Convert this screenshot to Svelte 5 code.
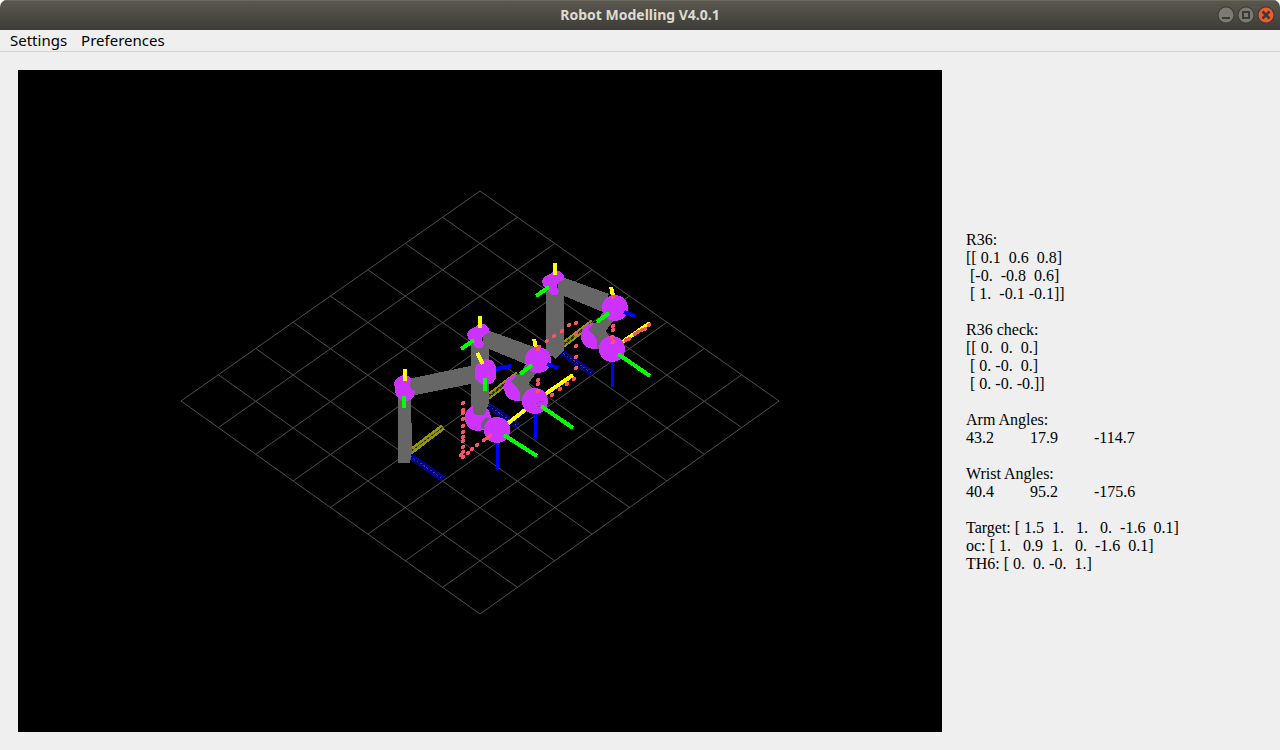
<script>
  const menus = ['Settings', 'Preferences'];

  const report = [
    'R36:',
    '[[ 0.1  0.6  0.8]',
    ' [-0.  -0.8  0.6]',
    ' [ 1.  -0.1 -0.1]]',
    '',
    'R36 check:',
    '[[ 0.  0.  0.]',
    ' [ 0. -0.  0.]',
    ' [ 0. -0. -0.]]',
    '',
    'Arm Angles:',
    '43.2         17.9         -114.7',
    '',
    'Wrist Angles:',
    '40.4         95.2         -175.6',
    '',
    'Target: [ 1.5  1.   1.   0.  -1.6  0.1]',
    'oc: [ 1.   0.9  1.   0.  -1.6  0.1]',
    'TH6: [ 0.  0. -0.  1.]'
  ].join('\n');

  // Floor grid: eight cells each way between the projected corners.
  const cells = 8;
  const top = [480, 191], left = [181, 401], right = [779, 401], bottom = [480, 614];
  const mix = (a, b, t) => [a[0] + (b[0] - a[0]) * t, a[1] + (b[1] - a[1]) * t];
  const grid = Array.from({ length: cells + 1 }, (_, i) => i / cells).flatMap((t) => [
    [mix(top, left, t), mix(right, bottom, t)],
    [mix(top, right, t), mix(left, bottom, t)]
  ]);

  const trail = [
    [463, 403], [463, 410], [463, 413], [463, 419], [463, 426], [463, 432], [463, 437], [463, 441],
    [463, 447], [463, 452], [461, 455], [463, 457], [468, 453], [472, 449], [477, 445], [484, 440],
    [487, 438], [490, 436],
    [576, 323], [569, 325], [562, 331], [554, 336], [547, 341], [539, 347], [538, 349],
    [576, 334], [576, 346], [576, 357], [576, 368], [574, 379], [567, 384], [560, 389], [552, 395],
    [538, 380], [538, 384], [538, 391],
    [613, 297], [613, 326], [613, 330], [612, 337], [613, 342],
    [649, 325], [645, 329], [642, 330], [638, 332], [635, 334], [629, 339], [626, 340]
  ];

  // Foot of each arm, with the thickness of the dark core in its base axes.
  const bases = [[-150, 105, 1], [-75, 52, 2], [0, 0, 2]];
</script>

<div class="window">
  <header class="titlebar">
    <h1>Robot Modelling V4.0.1</h1>
    <div class="controls">
      <button aria-label="Minimize">
        <svg viewBox="0 0 18 18"><circle cx="9" cy="9" r="8.5" fill="#3b3a35" /><circle cx="9" cy="9" r="7.5" fill="#7b7a73" /><path d="M5 12h8" stroke="#3b3a35" stroke-width="2" /></svg>
      </button>
      <button aria-label="Maximize">
        <svg viewBox="0 0 18 18"><circle cx="9" cy="9" r="8.5" fill="#3b3a35" /><circle cx="9" cy="9" r="7.5" fill="#7b7a73" /><path d="M6 6h6v6h-6z" fill="none" stroke="#3b3a35" stroke-width="2" /></svg>
      </button>
      <button aria-label="Close">
        <svg viewBox="0 0 18 18"><circle cx="9" cy="9" r="8.5" fill="#3b3a35" /><circle cx="9" cy="9" r="7.5" fill="#ee5b2d" /><path d="M5.5 5.5l7 7M12.5 5.5l-7 7" stroke="#3b3a35" stroke-width="2.5" /></svg>
      </button>
    </div>
  </header>

  <nav class="menubar">
    {#each menus as menu}
      <button>{menu}</button>
    {/each}
  </nav>

  <main>
    <div class="viewport">
      <svg viewBox="18 70 924 662" role="img" aria-label="Robot arm model" shape-rendering="crispEdges">
        <g stroke="#505050" stroke-width="1" shape-rendering="auto">
          {#each grid as [a, b]}
            <line x1={a[0]} y1={a[1]} x2={b[0]} y2={b[1]} />
          {/each}
        </g>

        {#each bases as [dx, dy, core]}
          <g transform="translate({dx} {dy})">
            <path d="M560 347L593 322" stroke="#959500" stroke-width="6" />
            <path d="M560 347L593 322" stroke="#2a2a00" stroke-width={core} />
            <path d="M560 347L593 322" stroke="#606030" stroke-width="1" stroke-dasharray="2 2" />
            <path d="M560 351L593 374" stroke="#0000a0" stroke-width="6" />
            <path d="M560 351L593 374" stroke="#000038" stroke-width={core} />
            <path d="M560 351L593 374" stroke="#404068" stroke-width="1" stroke-dasharray="2 2" />
          </g>
        {/each}

        {#snippet shoulder(dx, dy)}
          <g transform="translate({dx} {dy})">
            <path fill="#666" d="M546 288H564V351L555 359L552 356H546Z" />
            <path fill="#666" d="M560 277L565 278L609 294L603 312L564 296L556 294Z" />
            <path fill="#cc33ff" d="M542 281L544 277L550 274L554 271L560 271L564 276L565 279L561 281L557 284L557 288L559 291L557 295L551 295L548 291L543 285Z" />
            <path fill="#ff0" d="M553 263h4v12h-4z" />
            <path stroke="#0f0" stroke-width="4" d="M536 296L549 287" />
          </g>
        {/snippet}

        {#snippet wrist(dx, dy)}
          <g transform="translate({dx} {dy})">
            <circle cx="594" cy="336" r="13" fill="#cc33ff" />
            <path fill="#666" d="M593 324L597 322L603 312L617 316L605 332L610 337L602 350L597 349L597 341L595 337L588 330Z" />
            <path stroke="#ff0" stroke-width="4" d="M611 287L614 300" />
            <circle cx="615" cy="308" r="13" fill="#cc33ff" />
            <path stroke="#00f" stroke-width="4" d="M624 312L635 316" />
            <path stroke="#0f0" stroke-width="4" d="M597 322L609 313" />
            <path fill="#00f" d="M611 361h3v26h-3z" />
            <path stroke="#ff0" stroke-width="4" d="M621 343L650 323" />
            <circle cx="612" cy="349" r="13" fill="#cc33ff" />
            <path stroke="#0f0" stroke-width="4" d="M618 354L650 376" />
          </g>
        {/snippet}

        {@render shoulder(0, 0)}
        {@render wrist(0, 0)}
        {@render shoulder(-75, 53)}
        <path stroke="#ff0" stroke-width="4" d="M507 424L534 403" />
        {@render wrist(-77, 52)}
        <path stroke="#666" d="M539 401.5h5M536 403.5h2M542 404.5h1M537 406.5h3" />

        <g>
          <path fill="#666" d="M398 395H411L412 450L410 463H398Z" />
          <path fill="#666" d="M408 379L480 364V382L410 396Z" />
          <path fill="#cc33ff" d="M394 383L397 378L403 375L408 376L411 379L410 385L411 389L415 391L414 396L412 399L407 401L401 401L396 396Z" />
          <path fill="#ff0" d="M403 369h4v12h-4z" />
          <path fill="#0f0" d="M402 396h4v12h-4z" />
          <circle cx="478" cy="418" r="13" fill="#cc33ff" />
          <path fill="#666" d="M471 375H489L488 405L486 412L484 415H476L473 413V405L471 400ZM486 417L494 420L490 432L481 428L481 422Z" />
          <path fill="#cc33ff" d="M475 368L477 364L482 360L487 359L493 361L496 367V378L493 383L485 385L479 383L475 379Z" />
          <path stroke="#ff0" stroke-width="4" d="M477 353L483 364" />
          <path stroke="#00f" stroke-width="4" d="M496 369L511 366" />
          <path fill="#0f0" d="M483 378h4v13h-4z" />
          <path fill="#00f" d="M496 442h3v27h-3z" />
          <circle cx="497" cy="430" r="13" fill="#cc33ff" />
          <path stroke="#0f0" stroke-width="4" d="M504 435L537 456" />
        </g>

        <g fill="#ff5066">
          {#each trail as [x, y]}
            <circle cx={x} cy={y} r="2" />
          {/each}
        </g>
      </svg>
    </div>
    <pre class="report">{report}</pre>
  </main>
</div>

<style>
  :global(body) {
    margin: 0;
    background: #fff;
  }

  .window {
    display: flex;
    flex-direction: column;
    min-height: 100vh;
    background: #efefef;
    border-radius: 7px 7px 0 0;
    overflow: hidden;
  }

  .titlebar {
    display: grid;
    grid-template-columns: 1fr auto 1fr;
    align-items: center;
    height: 30px;
    padding: 0 5px;
    box-sizing: border-box;
    background: linear-gradient(#5b594e, #3d3c38);
    box-shadow: inset 0 1px #6b695f;
  }

  h1 {
    grid-column: 2;
    margin: 0;
    font: bold 14px/20px "Noto Sans", sans-serif;
    color: #dfdbd2;
  }

  .controls {
    display: flex;
    justify-content: flex-end;
    gap: 2px;
  }

  .controls button {
    width: 18px;
    height: 18px;
    padding: 0;
    border: 0;
    background: none;
  }

  .controls svg {
    display: block;
    width: 18px;
    height: 18px;
  }

  .menubar {
    display: flex;
    gap: 14px;
    height: 21px;
    padding: 0 10px;
    border-bottom: 1px solid #d3d3d3;
  }

  .menubar button {
    padding: 0;
    border: 0;
    background: none;
    font: 15px/21px "Noto Sans", sans-serif;
    color: #000;
  }

  main {
    flex: 1;
    display: grid;
    grid-template-columns: minmax(0, 1fr) 296px;
    gap: 24px;
    padding: 18px;
  }

  .viewport {
    display: flex;
    background: #000;
  }

  .viewport svg {
    display: block;
    width: 100%;
    height: auto;
  }

  .report {
    align-self: center;
    margin: 0;
    padding-top: 2px;
    font: 16px/18px "Liberation Serif", serif;
    color: #000;
  }
</style>
